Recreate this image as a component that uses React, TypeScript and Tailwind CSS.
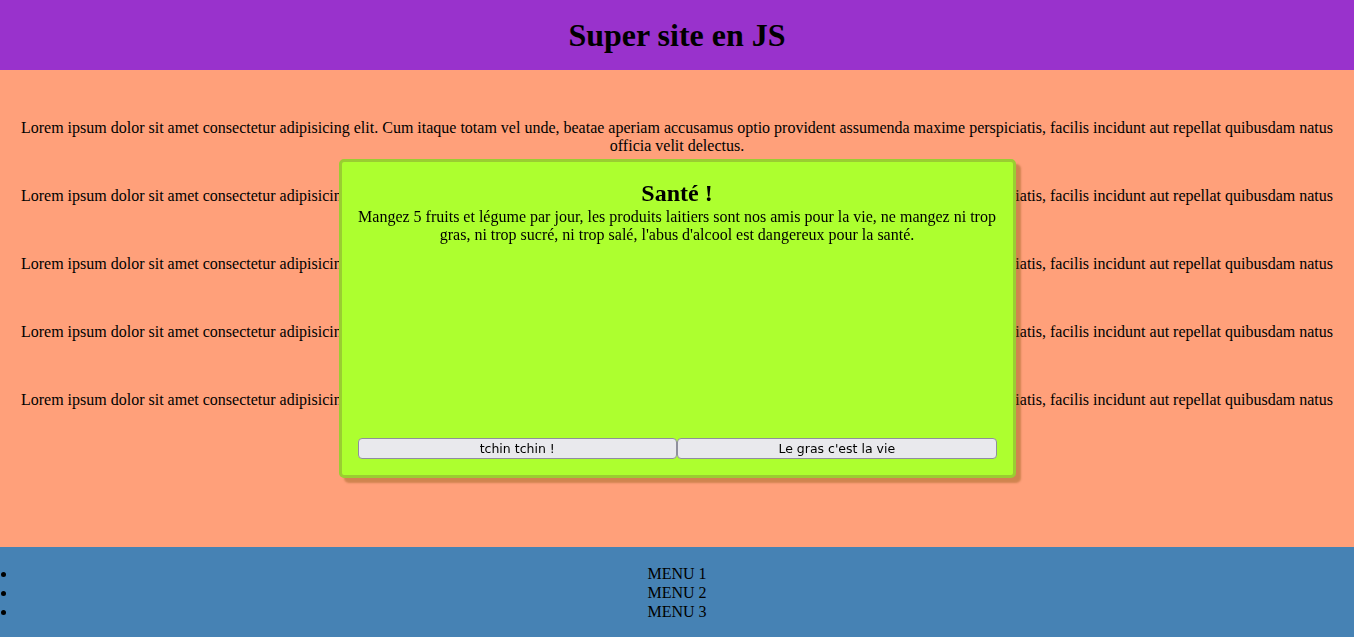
import React from "react";

const lorem =
  "Lorem ipsum dolor sit amet consectetur adipisicing elit. Cum itaque totam vel unde, beatae aperiam accusamus optio provident assumenda maxime perspiciatis, facilis incidunt aut repellat quibusdam natus officia velit delectus.";

const App = () => {
  return (
    <div className="font-['Liberation_Serif',serif] text-black text-[16px] leading-[normal]">
      <header className="h-[70px] bg-[#9932cc] flex items-center justify-center">
        <h1 className="text-[32px] font-bold">Super site en JS</h1>
      </header>

      <main className="h-[477px] bg-[#ffa07a] pt-[33px] px-4 text-center flex flex-col">
        {[1, 2, 3, 4, 5].map((i) => (
          <p key={i} className="my-4">
            {lorem}
          </p>
        ))}
      </main>

      <footer className="h-[90px] bg-[#4682b4] pt-[17px] px-[18px]">
        <ul className="list-disc text-center leading-[19px] marker:text-[18px]">
          <li>MENU 1</li>
          <li>MENU 2</li>
          <li>MENU 3</li>
        </ul>
      </footer>

      <div className="fixed top-1/4 left-1/4 w-1/2 h-1/2 bg-[#adff2f] border-[3px] border-[#9acd32] rounded-[5px] shadow-[5px_5px_2px_rgba(120,80,0,0.35)] p-4 flex flex-col justify-between text-center">
        <div>
          <h2 className="text-2xl font-bold leading-[30px]">Santé !</h2>
          <p>
            Mangez 5 fruits et légume par jour, les produits laitiers sont nos amis pour la vie, ne mangez ni trop
            gras, ni trop sucré, ni trop salé, l'abus d'alcool est dangereux pour la santé.
          </p>
        </div>
        <div className="flex font-['DejaVu_Sans',sans-serif] text-[12.5px]">
          <button className="w-1/2 h-[21px] bg-[#e9e9ed] border border-[#8f8f9d] rounded-[4px]">tchin tchin !</button>
          <button className="w-1/2 h-[21px] bg-[#e9e9ed] border border-[#8f8f9d] rounded-[4px]">Le gras c'est la vie</button>
        </div>
      </div>
    </div>
  );
};

export default App;
